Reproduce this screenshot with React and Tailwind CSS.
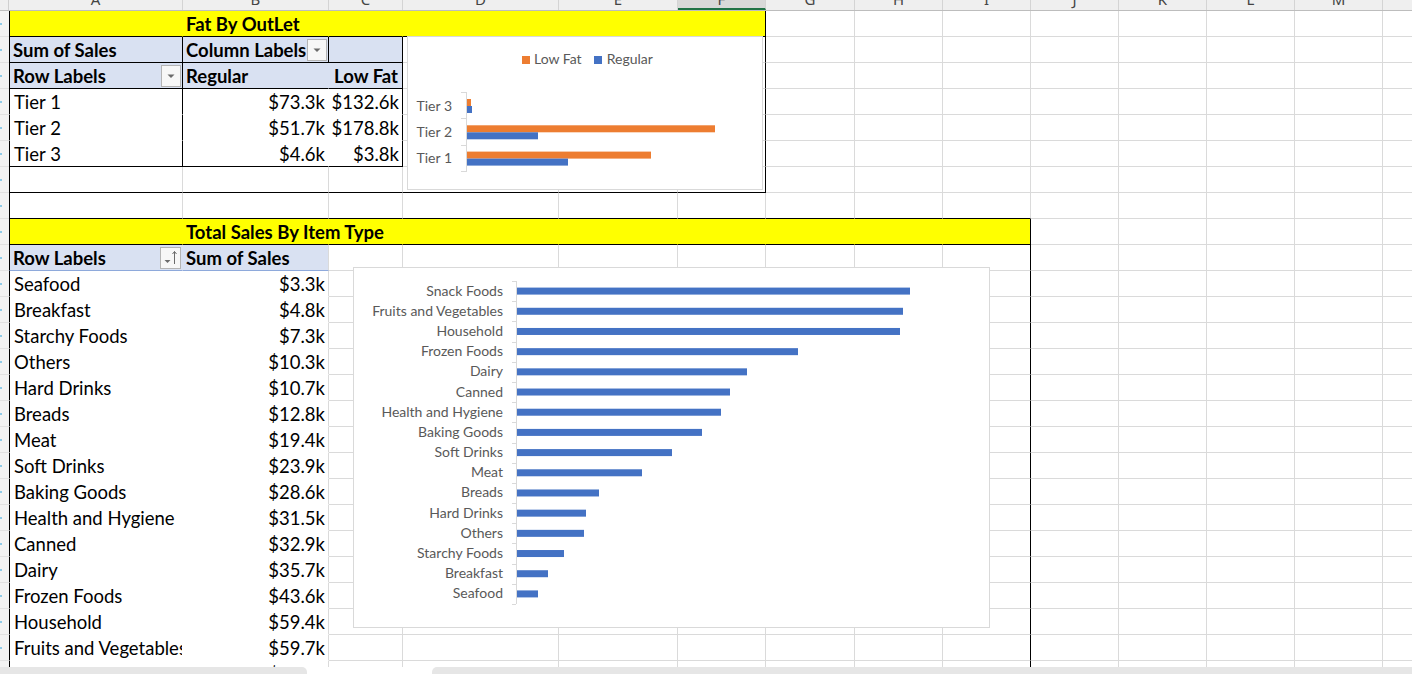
import React from 'react';

const G = 'border-r-[#dadada]';
const GB = 'border-b-[#dadada]';
const K = 'border-r-black';
const KB = 'border-b-black';
const T = 'border-r-transparent';
const TB = 'border-b-transparent';
const LB = 'border-b-[#8ea9db]';
const YEL = 'bg-[#ffff00]';
const BLU = 'bg-[#d9e1f2]';

const COLS = [
  { l: 'A', w: 'w-[174px]' },
  { l: 'B', w: 'w-[146px]' },
  { l: 'C', w: 'w-[74px]' },
  { l: 'D', w: 'w-[156px]' },
  { l: 'E', w: 'w-[119px]' },
  { l: 'F', w: 'w-[88px]' },
  { l: 'G', w: 'w-[89px]' },
  { l: 'H', w: 'w-[88px]' },
  { l: 'I', w: 'w-[88px]' },
  { l: 'J', w: 'w-[88px]' },
  { l: 'K', w: 'w-[88px]' },
  { l: 'L', w: 'w-[88px]' },
  { l: 'M', w: 'w-[88px]' },
  { l: 'N', w: 'w-[88px]' },
];

function Cell({ w, bg = 'bg-white', r = G, b = GB, extra = '', children }) {
  return (
    <div className={`${w} h-[26px] shrink-0 border-r border-b ${r} ${b} ${bg} ${extra} flex items-end`}>
      {children}
    </div>
  );
}

function L({ children }) {
  return (
    <span className="pl-[4px] pb-[3px] leading-none text-[18.5px] text-black whitespace-nowrap">{children}</span>
  );
}
function R({ children }) {
  return (
    <span className="ml-auto pr-[3px] pb-[3px] leading-none text-[18.5px] text-black whitespace-nowrap">{children}</span>
  );
}
function Bd({ children }) {
  return (
    <span className="pl-[3px] pb-[3px] leading-none text-[18.5px] font-bold text-black whitespace-nowrap">{children}</span>
  );
}
function BdR({ children }) {
  return (
    <span className="ml-auto pr-[4px] pb-[3px] leading-none text-[18.5px] font-bold text-black whitespace-nowrap">{children}</span>
  );
}
function Title({ children }) {
  return (
    <span className="relative z-10 pl-[3px] pb-[3px] leading-none text-[18.5px] font-bold text-black whitespace-nowrap">{children}</span>
  );
}

function DropBtn() {
  return (
    <div className="ml-auto mr-[1px] mb-[1px] w-[20px] h-[22px] shrink-0 border border-[#b4b4b4] bg-[#f7f7f7] flex items-center justify-center">
      <svg width="8" height="6" viewBox="0 0 8 6">
        <path d="M0.5 1.5 L7.5 1.5 L4 5 Z" fill="#6b6b6b" />
      </svg>
    </div>
  );
}

function SortBtn() {
  return (
    <div className="ml-auto mr-[1px] mb-[1px] w-[21px] h-[22px] shrink-0 border border-[#b4b4b4] bg-[#f7f7f7] flex items-center justify-center">
      <svg width="19" height="20" viewBox="0 0 19 20">
        <path d="M3.5 12 L9.5 12 L6.5 15 Z" fill="#6b6b6b" />
        <path d="M13.5 16 V3.5" stroke="#6b6b6b" strokeWidth="1" />
        <path d="M11.5 6 L13.5 3.5 L15.5 6" stroke="#6b6b6b" strokeWidth="1" fill="none" />
      </svg>
    </div>
  );
}

const ITEMS = [
  ['Seafood', '$3.3k'],
  ['Breakfast', '$4.8k'],
  ['Starchy Foods', '$7.3k'],
  ['Others', '$10.3k'],
  ['Hard Drinks', '$10.7k'],
  ['Breads', '$12.8k'],
  ['Meat', '$19.4k'],
  ['Soft Drinks', '$23.9k'],
  ['Baking Goods', '$28.6k'],
  ['Health and Hygiene', '$31.5k'],
  ['Canned', '$32.9k'],
  ['Dairy', '$35.7k'],
  ['Frozen Foods', '$43.6k'],
  ['Household', '$59.4k'],
  ['Fruits and Vegetables', '$59.7k'],
  ['Snack Foods', '$61.0k'],
];

function buildRows() {
  const rows = [];
  rows.push({
    A: { bg: YEL, r: T, b: KB },
    B: { bg: YEL, r: T, b: KB, children: <Title>Fat By OutLet</Title> },
    C: { bg: YEL, r: T, b: KB },
    D: { bg: YEL, r: T, b: KB },
    E: { bg: YEL, r: T, b: KB },
    F: { bg: YEL, r: K, b: KB },
  });
  rows.push({
    A: { bg: BLU, r: K, b: KB, children: <Bd>Sum of Sales</Bd> },
    B: { bg: BLU, r: K, b: KB, children: <><Bd>Column Labels</Bd><DropBtn /></> },
    C: { bg: BLU, r: K, b: KB },
    F: { r: K },
  });
  rows.push({
    A: { bg: BLU, r: K, b: KB, children: <><Bd>Row Labels</Bd><DropBtn /></> },
    B: { bg: BLU, r: T, b: KB, children: <Bd>Regular</Bd> },
    C: { bg: BLU, r: K, b: KB, children: <BdR>Low Fat</BdR> },
    F: { r: K },
  });
  const tiers = [
    ['Tier 1', '$73.3k', '$132.6k'],
    ['Tier 2', '$51.7k', '$178.8k'],
    ['Tier 3', '$4.6k', '$3.8k'],
  ];
  tiers.forEach(([t, a, b], i) => {
    const bb = i === 2 ? KB : TB;
    rows.push({
      A: { r: K, b: bb, children: <L>{t}</L> },
      B: { r: T, b: bb, children: <R>{a}</R> },
      C: { r: K, b: bb, children: <R>{b}</R> },
      F: { r: K },
    });
  });
  rows.push({
    A: { b: KB }, B: { b: KB }, C: { b: KB }, D: { b: KB }, E: { b: KB }, F: { r: K, b: KB },
  });
  rows.push({
    A: { b: KB }, B: { b: KB }, C: { b: KB }, D: { b: KB }, E: { b: KB }, F: { b: KB },
    G: { b: KB }, H: { b: KB }, I: { b: KB },
  });
  rows.push({
    A: { bg: YEL, r: T, b: KB },
    B: { bg: YEL, r: T, b: KB, children: <Title>Total Sales By Item Type</Title> },
    C: { bg: YEL, r: T, b: KB },
    D: { bg: YEL, r: T, b: KB },
    E: { bg: YEL, r: T, b: KB },
    F: { bg: YEL, r: T, b: KB },
    G: { bg: YEL, r: T, b: KB },
    H: { bg: YEL, r: T, b: KB },
    I: { bg: YEL, r: K, b: KB },
  });
  rows.push({
    A: { bg: BLU, r: T, b: LB, children: <><Bd>Row Labels</Bd><SortBtn /></> },
    B: { bg: BLU, r: G, b: LB, children: <Bd>Sum of Sales</Bd> },
    I: { r: K },
  });
  ITEMS.forEach(([n, v]) => {
    rows.push({
      A: { r: T, b: TB, extra: 'overflow-hidden', children: <L>{n}</L> },
      B: { b: TB, children: <R>{v}</R> },
      I: { r: K },
    });
  });
  return rows;
}

function Chart1() {
  const cats = [
    { l: 'Tier 3', c: 69, o: 5, b: 6, y: 73.7 },
    { l: 'Tier 2', c: 95.3, o: 249, b: 72, y: 100 },
    { l: 'Tier 1', c: 121.6, o: 185, b: 102, y: 126.3 },
  ];
  const ticks = [55, 81, 108, 134];
  return (
    <div className="absolute left-[407px] top-[25px] w-[356px] h-[154px] bg-white border border-[#d9d9d9]">
      <svg width="354" height="152" className="block font-['Lato',sans-serif]">
        <rect x="114" y="19" width="8" height="8" fill="#ed7d31" />
        <text x="126" y="27" fontSize="14" fill="#595959">Low Fat</text>
        <rect x="186" y="19" width="8" height="8" fill="#4472c4" />
        <text x="198.7" y="27" fontSize="14" fill="#595959">Regular</text>
        {cats.map((c) => (
          <g key={c.l}>
            <rect x="58" y={c.c - 7} width={c.o} height="7" fill="#ed7d31" />
            <rect x="58" y={c.c} width={c.b} height="7" fill="#4472c4" />
            <text x="44" y={c.y} textAnchor="end" fontSize="14" fill="#595959">{c.l}</text>
          </g>
        ))}
        <line x1="58.5" y1="55" x2="58.5" y2="135" stroke="#d9d9d9" />
        {ticks.map((t) => (
          <line key={t} x1="53" y1={t + 0.5} x2="58" y2={t + 0.5} stroke="#d9d9d9" />
        ))}
      </svg>
    </div>
  );
}

const BARS = [
  ['Snack Foods', 910],
  ['Fruits and Vegetables', 903],
  ['Household', 900],
  ['Frozen Foods', 798],
  ['Dairy', 747],
  ['Canned', 730],
  ['Health and Hygiene', 721],
  ['Baking Goods', 702],
  ['Soft Drinks', 672],
  ['Meat', 642],
  ['Breads', 599],
  ['Hard Drinks', 586],
  ['Others', 584],
  ['Starchy Foods', 564],
  ['Breakfast', 548],
  ['Seafood', 538],
];

function Chart2() {
  const step = 20.1875;
  return (
    <div className="absolute left-[353px] top-[256px] w-[637px] h-[361px] bg-white border border-[#d9d9d9]">
      <svg width="635" height="359" className="block font-['Lato',sans-serif]">
        {BARS.map(([n, end], k) => {
          const c = 13 + (k + 0.5) * step;
          return (
            <g key={n}>
              <rect x="162.5" y={c - 3.5} width={end - 516.5} height="7" fill="#4472c4" />
              <text x="149" y={c + 4.5} textAnchor="end" fontSize="14" fill="#595959">{n}</text>
            </g>
          );
        })}
        <line x1="162.5" y1="13" x2="162.5" y2="336" stroke="#d9d9d9" />
        {Array.from({ length: 17 }).map((_, k) => {
          const y = Math.round(13 + k * step) + 0.5;
          return <line key={k} x1="158" y1={y} x2="162" y2={y} stroke="#d9d9d9" />;
        })}
      </svg>
    </div>
  );
}

export default function App() {
  const rows = buildRows();
  return (
    <div className="w-[1412px] h-[674px] overflow-hidden bg-white font-['Lato',sans-serif] flex flex-col">
      {/* column header */}
      <div className="flex h-[11px] shrink-0 bg-[#efefef] border-b border-b-[#bdbdbd]">
        <div className="w-[9px] shrink-0 border-r border-r-[#cfcfcf]" />
        {COLS.map((c) => (
          <div
            key={c.l}
            className={`${c.w} shrink-0 h-[10px] border-r border-r-[#d4d4d4] flex flex-col justify-end items-center overflow-hidden ${c.l === 'F' ? 'bg-[#d9d9d9] border-b-2 border-b-[#217346]' : ''}`}
          >
            <span className={`font-['Noto_Sans',sans-serif] text-[15px] leading-[15px] text-[#444] ${c.l === 'F' ? 'pb-[1px]' : 'pb-[3px]'}`}>{c.l}</span>
          </div>
        ))}
      </div>
      {/* grid body */}
      <div className="relative h-[656px] shrink-0 overflow-hidden">
        {rows.map((spec, i) => (
          <div key={i} className="flex">
            <div className="w-[9px] h-[26px] shrink-0 bg-[#f3f3f3] border-b border-b-[#e2e2e2] flex items-center">
              <div className="w-[2px] h-[2px] bg-[#8fcbe8]" />
            </div>
            {COLS.map((c) => {
              const s = spec[c.l] || {};
              const extra = c.l === 'A' ? `border-l border-l-black ${s.extra || ''}` : s.extra || '';
              return (
                <Cell key={c.l} w={c.w} bg={s.bg} r={s.r} b={s.b} extra={extra}>
                  {s.children}
                </Cell>
              );
            })}
          </div>
        ))}
        <Chart1 />
        <Chart2 />
      </div>
      {/* horizontal scrollbar */}
      <div className="flex h-[7px] shrink-0 bg-white">
        <div className="w-[307px] bg-[#e6e6e6] rounded-tr-[5px]" />
        <div className="w-[125px]" />
        <div className="flex-1 bg-[#e6e6e6] rounded-tl-[5px]" />
      </div>
    </div>
  );
}
